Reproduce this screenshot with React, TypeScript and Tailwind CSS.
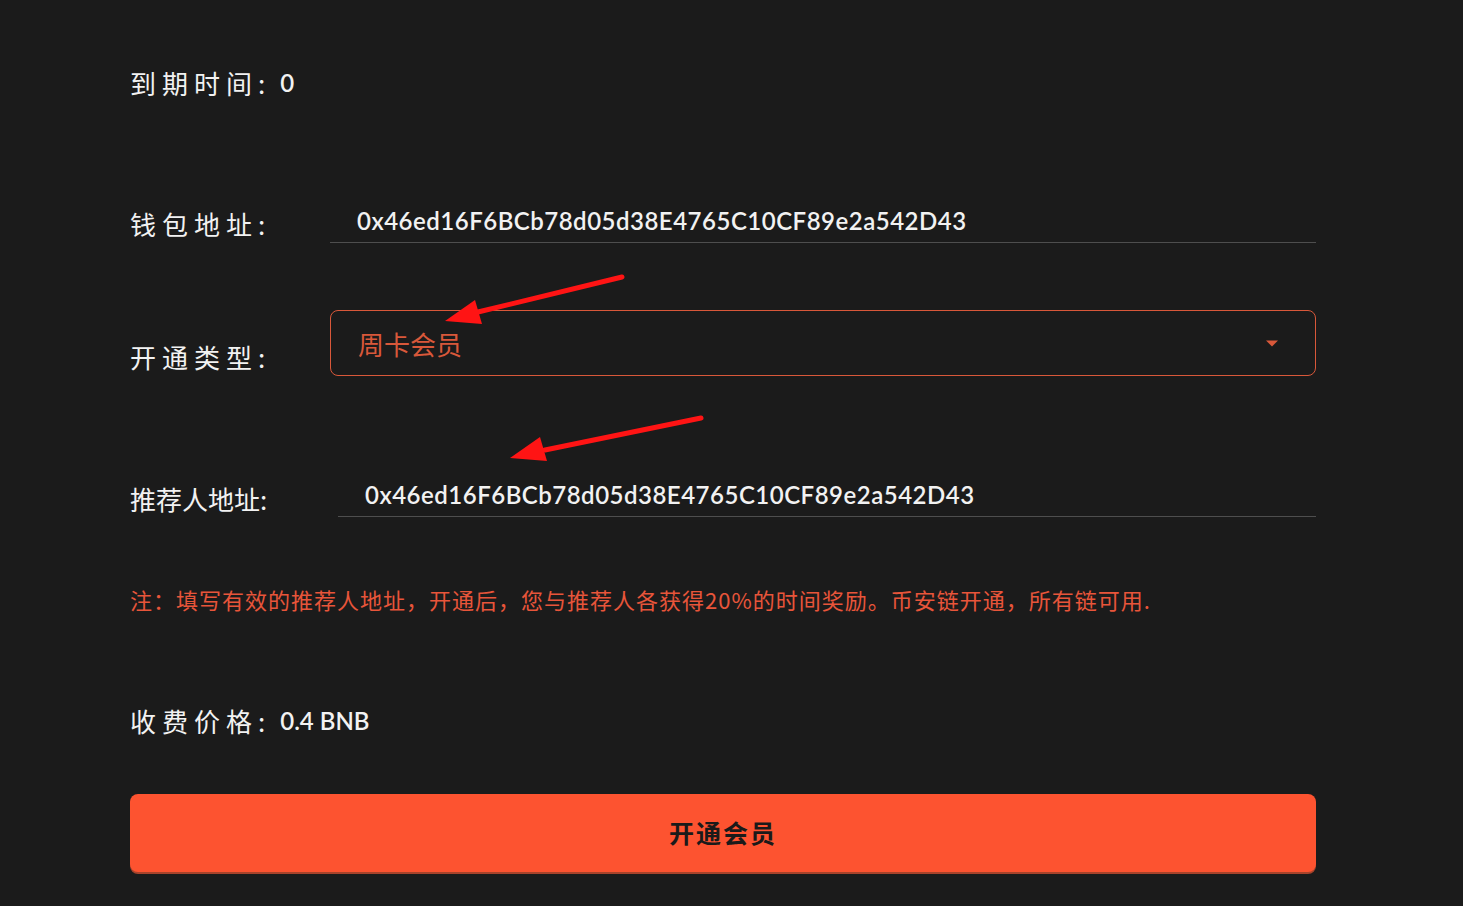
import React from "react";

const cjk = { fontFamily: '"Noto Sans CJK SC", "Noto Sans", sans-serif' };
const latin = { fontFamily: 'Lato, "Noto Sans CJK SC", sans-serif' };

function Label({ children, wide = true }: { children: React.ReactNode; wide?: boolean }) {
  return (
    <div
      className={`text-[26px] leading-[32px] font-normal text-[#f2f2f2] whitespace-nowrap ${wide ? "tracking-[6px]" : "tracking-[0px]"}`}
      style={cjk}
    >
      {children}
    </div>
  );
}

export default function App() {
  const addr = "0x46ed16F6BCb78d05d38E4765C10CF89e2a542D43";
  return (
    <div className="relative min-h-[906px] w-full bg-[#1b1b1b] overflow-hidden">
      <div className="ml-[130px] w-[1186px] pt-[67px] flex flex-col">
        {/* expiry */}
        <div className="flex items-center h-[32px]">
          <Label>到期时间:</Label>
          <span className="ml-[9px] text-[24px] font-semibold text-[#f2f2f2]" style={latin}>0</span>
        </div>

        {/* wallet */}
        <div className="mt-[100px] flex items-center">
          <div className="w-[200px] pt-[6px]">
            <Label>钱包地址:</Label>
          </div>
          <div className="flex-1 h-[44px] border-b border-[#4e4e4e] pl-[27px] flex items-center">
            <span className="text-[24px] font-semibold text-[#f2f2f2] tracking-[0.5px]" style={latin}>{addr}</span>
          </div>
        </div>

        {/* type select */}
        <div className="mt-[67px] flex items-end">
          <div className="w-[200px] mb-[3px]">
            <Label>开通类型:</Label>
          </div>
          <div className="flex-1 h-[66px] rounded-[8px] border border-[#d9583a] pl-[27px] pr-[37px] flex items-center justify-between">
            <span className="text-[26px] text-[#d9583a]" style={cjk}>周卡会员</span>
            <svg width="12" height="8" viewBox="0 0 12 8">
              <path d="M0 1.5 L12 1.5 L6 7.5 Z" fill="#d9583a" />
            </svg>
          </div>
        </div>

        {/* referrer */}
        <div className="mt-[97px] flex items-center">
          <div className="w-[208px] pt-[8px]">
            <Label wide={false}>推荐人地址:</Label>
          </div>
          <div className="flex-1 h-[44px] border-b border-[#4e4e4e] pl-[27px] flex items-center">
            <span className="text-[24px] font-semibold text-[#f2f2f2] tracking-[0.5px]" style={latin}>{addr}</span>
          </div>
        </div>

        {/* note */}
        <div className="mt-[66px] text-[22px] leading-[32px] text-[#e8553a] tracking-[1px] whitespace-nowrap" style={cjk}>
          注：填写有效的推荐人地址，开通后，您与推荐人各获得20%的时间奖励。币安链开通，所有链可用.
        </div>

        {/* price */}
        <div className="mt-[90px] flex items-center h-[32px]">
          <Label>收费价格:</Label>
          <span className="ml-[9px] text-[24px] font-semibold text-[#f2f2f2]" style={latin}>0.4 BNB</span>
        </div>

        {/* button */}
        <button
          className="mt-[57px] h-[78px] w-full rounded-[8px] bg-[#fd5330] shadow-[0_2px_0_#a8432b] flex items-center justify-center"
        >
          <span className="text-[25px] font-bold text-[#1a1a1a] tracking-[2px]" style={cjk}>开通会员</span>
        </button>
      </div>

      {/* annotation arrows */}
      <svg className="absolute left-0 top-0 pointer-events-none" width="1463" height="906">
        <line x1="622" y1="277" x2="478" y2="312" stroke="#ff1414" strokeWidth="5" strokeLinecap="round" />
        <path d="M445 321 L475 300 L482 324 Z" fill="#ff1414" />
        <line x1="701" y1="418" x2="545" y2="450" stroke="#ff1414" strokeWidth="5" strokeLinecap="round" />
        <path d="M510 458 L540 437 L547 461 Z" fill="#ff1414" />
      </svg>
    </div>
  );
}
